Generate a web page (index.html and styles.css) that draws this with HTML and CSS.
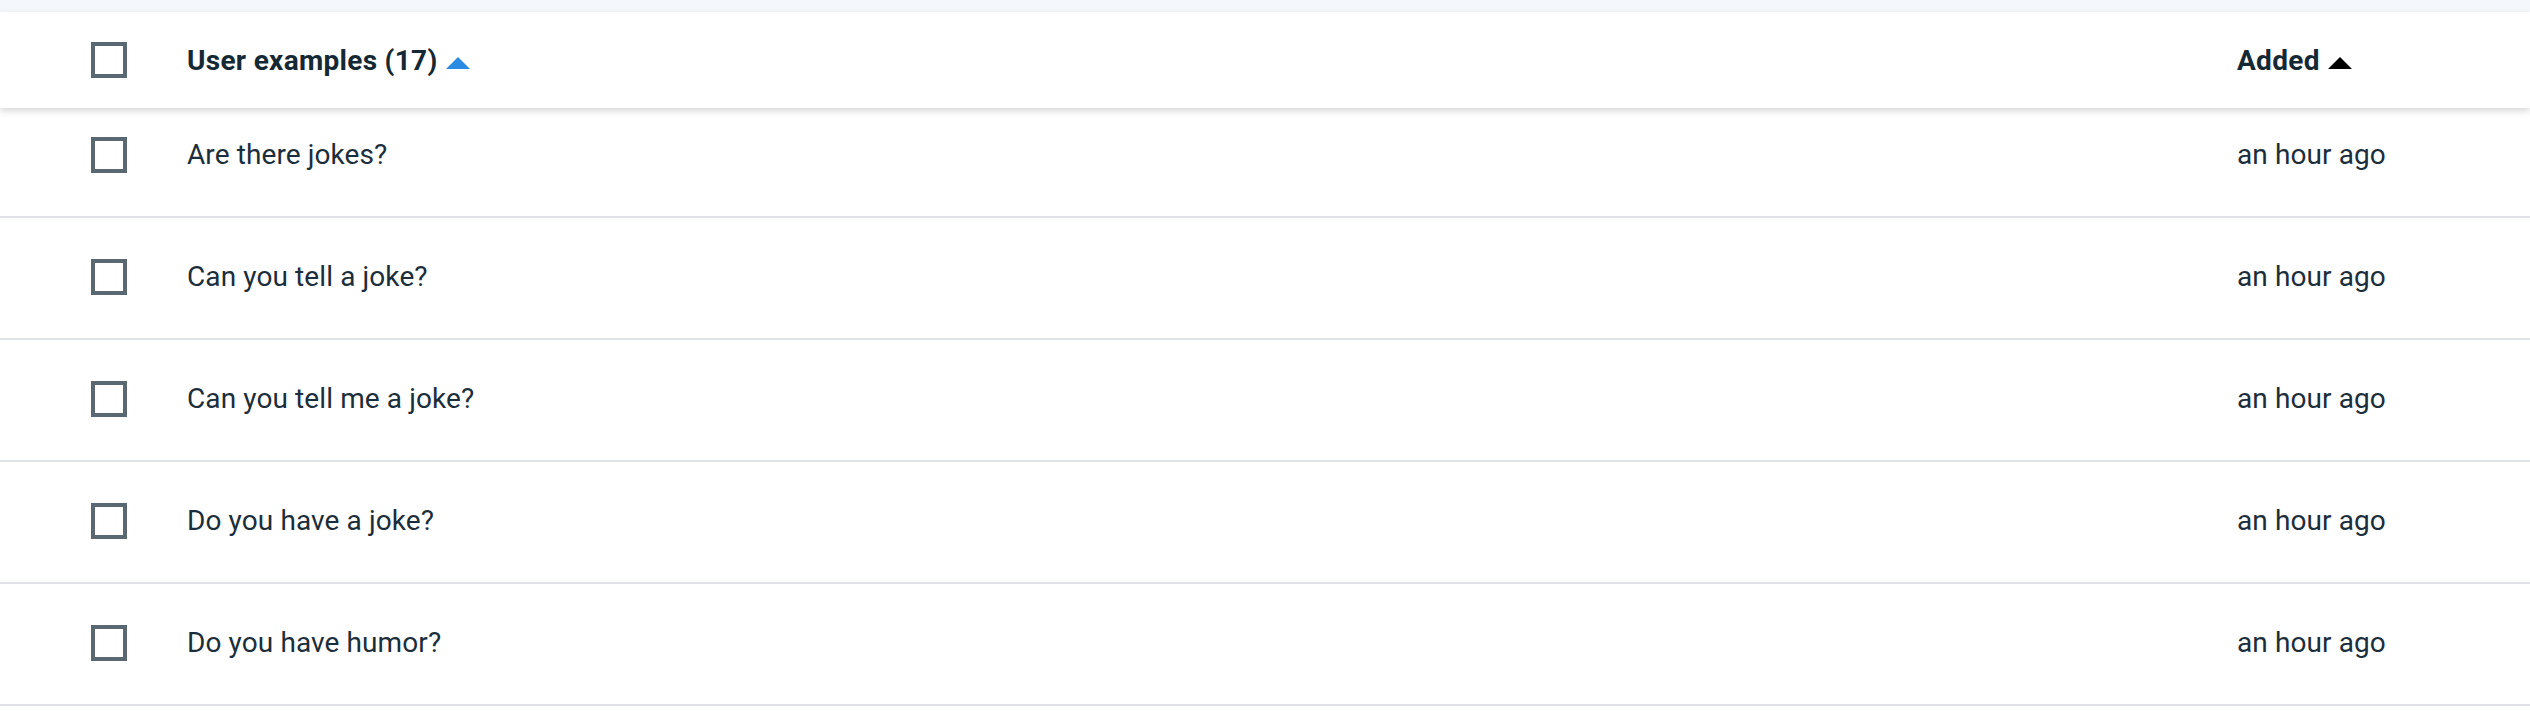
FILE: index.html
```html
<!DOCTYPE html>
<html lang="en">
<head>
    <meta charset="UTF-8">
    <meta name="viewport" content="width=device-width, initial-scale=1.0">
    <title>User examples</title>
    <link rel="stylesheet" href="styles.css">
</head>
<body>
    <div class="topbar"></div>
    <div class="table">
        <div class="head">
            <div class="cell-check"><span class="checkbox"></span></div>
            <div class="col-title">
                User examples (17)
                <svg class="sort-icon" width="24" height="12" viewBox="0 0 24 12"><path d="M12 0 L24 12 L0 12 Z" fill="#2a8be4"/></svg>
            </div>
            <div class="col-date">
                Added
                <svg class="sort-icon" width="24" height="12" viewBox="0 0 24 12"><path d="M12 0 L24 12 L0 12 Z" fill="#000000"/></svg>
            </div>
        </div>
        <div class="rows">
            <div class="row">
                <div class="cell-check"><span class="checkbox"></span></div>
                <div class="col-title">Are there jokes?</div>
                <div class="col-date">an hour ago</div>
            </div>
            <div class="row">
                <div class="cell-check"><span class="checkbox"></span></div>
                <div class="col-title">Can you tell a joke?</div>
                <div class="col-date">an hour ago</div>
            </div>
            <div class="row">
                <div class="cell-check"><span class="checkbox"></span></div>
                <div class="col-title">Can you tell me a joke?</div>
                <div class="col-date">an hour ago</div>
            </div>
            <div class="row">
                <div class="cell-check"><span class="checkbox"></span></div>
                <div class="col-title">Do you have a joke?</div>
                <div class="col-date">an hour ago</div>
            </div>
            <div class="row">
                <div class="cell-check"><span class="checkbox"></span></div>
                <div class="col-title">Do you have humor?</div>
                <div class="col-date">an hour ago</div>
            </div>
        </div>
    </div>
</body>
</html>
```
FILE: styles.css
```css
body {
    margin: 0;
    background-color: #ffffff;
    color: #1c2e3b;
    font-family: Roboto, "Liberation Sans", sans-serif;
    font-size: 28px;
    overflow: hidden;
}

.topbar {
    height: 12px;
    background-color: #f4f7fb;
}

.table {
    background-color: #ffffff;
}

.head, .row {
    display: grid;
    grid-template-columns: 187px 1fr 293px;
    align-items: center;
}

.head {
    position: relative;
    z-index: 1;
    height: 96px;
    background-color: #ffffff;
    color: #152935;
    font-weight: 700;
    letter-spacing: 0.3px;
    box-shadow: 0 3px 7px rgba(0, 0, 0, 0.16);
}

.rows {
    margin-top: -12px;
}

.row {
    height: 120px;
    border-bottom: 2px solid #dfe3e6;
    letter-spacing: 0.1px;
    line-height: 1;
    padding-bottom: 2px;
    box-sizing: border-box;
    height: 122px;
}

.cell-check {
    padding-left: 91px;
    display: flex;
    align-items: center;
}

.checkbox {
    display: block;
    width: 28px;
    height: 28px;
    border: 4px solid #5a6872;
}

.col-title, .col-date {
    white-space: nowrap;
}

.sort-icon {
    margin-left: 1px;
    vertical-align: 1px;
}
```
